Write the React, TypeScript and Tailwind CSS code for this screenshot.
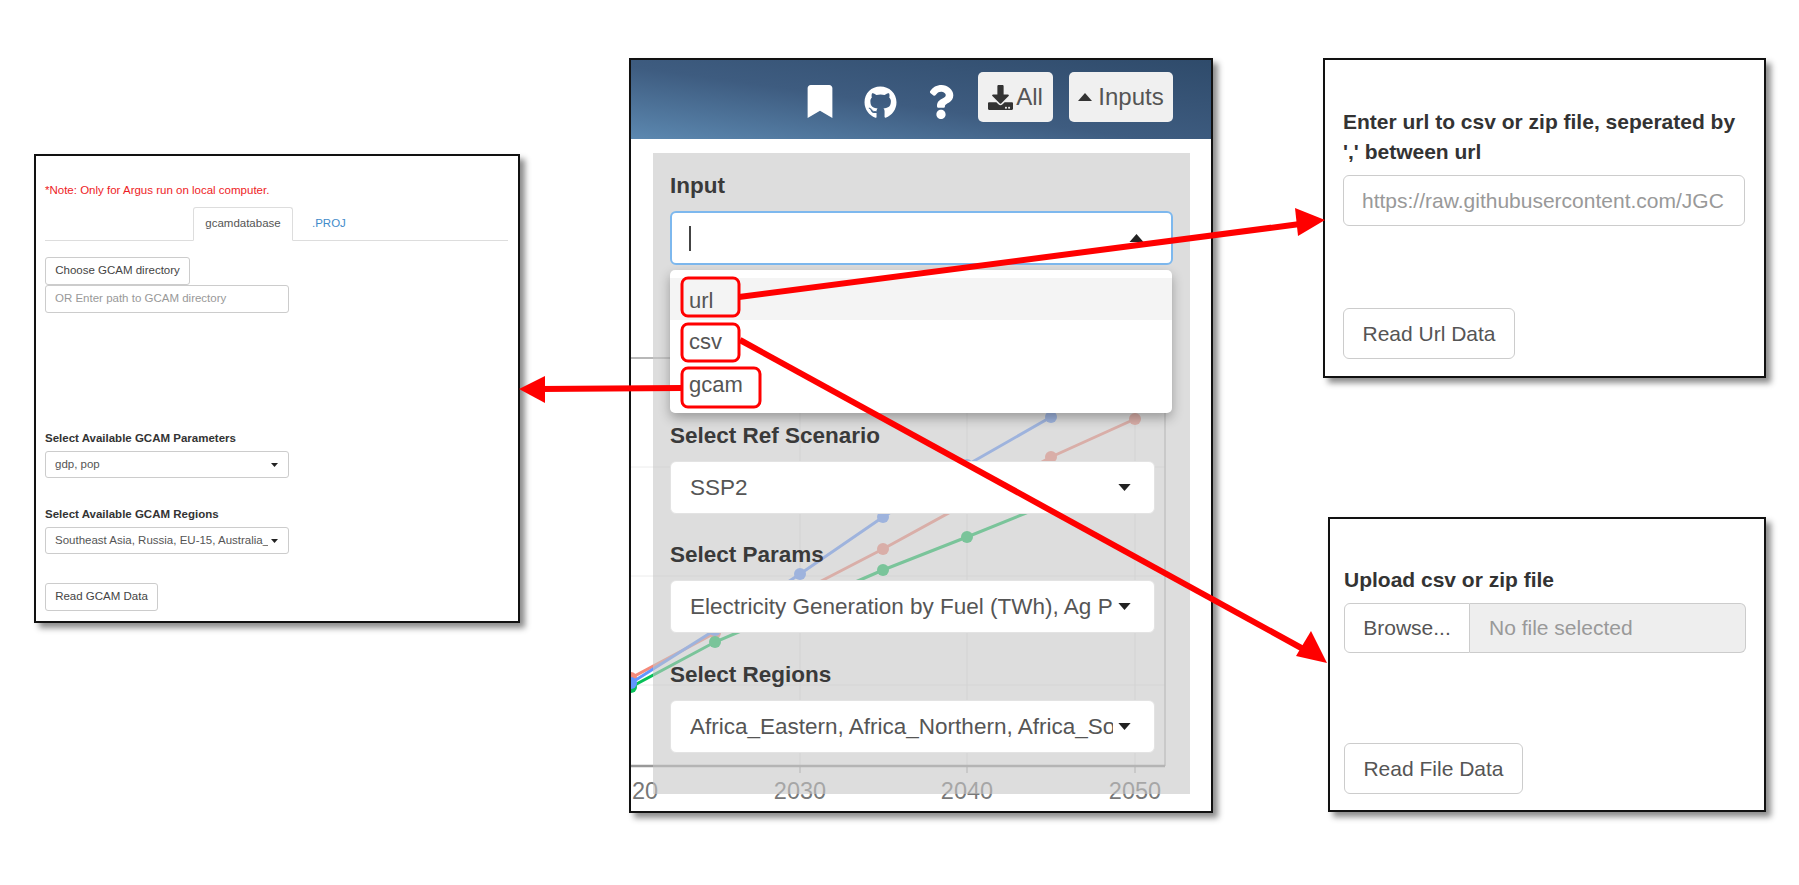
import React from 'react';
import { FaBookmark, FaDownload, FaGithub, FaQuestion } from 'react-icons/fa';

// chart coordinates are page pixels, the svg viewBox starts at the chart origin
const series = [
    { color: '#f58a7a', pts: [[631, 678], [715, 633], [800, 592], [883, 549], [967, 503], [1051, 457], [1135, 419]] },
    { color: '#08c058', pts: [[631, 687], [715, 642], [800, 606], [883, 570], [967, 537], [1051, 503], [1135, 470]] },
    { color: '#6297ff', pts: [[631, 683], [715, 630], [800, 574], [883, 517], [967, 465], [1051, 417]] },
];

function Caret({ up = false, className = '' }: { up?: boolean; className?: string }) {
    return (
        <svg className={`shrink-0 ${className}`} viewBox="0 0 14 8">
            <polygon points={up ? '7,0 14,8 0,8' : '0,0 14,0 7,8'} fill="currentColor" />
        </svg>
    );
}

function Frame({ className, children }: { className: string; children: React.ReactNode }) {
    return (
        <div className={`absolute bg-white border-2 border-[#111] shadow-[5px_5px_6px_rgba(0,0,0,0.45)] ${className}`}>
            {children}
        </div>
    );
}

function BigSelect({ label, value, mt }: { label: string; value: string; mt: string }) {
    return (
        <div className={mt}>
            <div className="h-[24px] leading-[24px] text-[22.5px] font-bold text-[#3a3a3a]">{label}</div>
            <div className="mt-[13px] w-[485px] h-[53px] bg-white rounded-[6px] border border-[#e3e3e3] flex items-center pl-[19px] pr-[23px] text-[22.5px] text-[#555]">
                <span className="flex-1 overflow-hidden whitespace-nowrap">{value}</span>
                <Caret className="ml-[5px] w-[13px] h-[7px] text-[#222]" />
            </div>
        </div>
    );
}

function SmallSelect({ label, value, mt }: { label: string; value: string; mt: string }) {
    return (
        <div className={mt}>
            <div className="h-[14px] leading-[14px] text-[11.5px] font-bold text-[#333]">{label}</div>
            <div className="mt-[6px] w-[244px] h-[27px] border border-[#ccc] rounded-[3px] flex items-center pl-[9px] pr-[10px] text-[11.5px] text-[#555]">
                <span className="flex-1 overflow-hidden whitespace-nowrap">{value}</span>
                <Caret className="ml-[3px] w-[7px] h-[4px] text-[#222]" />
            </div>
        </div>
    );
}

function GcamPanel() {
    return (
        <Frame className="left-[34px] top-[154px] w-[486px] h-[469px] px-[9px] text-[11.5px]">
            <div className="pt-[27px] h-[51px] leading-[14px] text-[11.5px] text-[#ee1c25]">*Note: Only for Argus run on local computer.</div>
            <div className="h-[34px] w-[463px] border-b border-[#ddd] flex pl-[148px]">
                <div className="w-[100px] h-[34px] bg-white border border-[#ddd] border-b-white rounded-t-[3px] flex items-center justify-center text-[#555]">gcamdatabase</div>
                <div className="ml-[19px] h-[33px] flex items-center text-[#428bca]">.PROJ</div>
            </div>
            <div className="mt-[16px] w-[145px] h-[28px] border border-[#ccc] rounded-[3px] flex items-center justify-center text-[#444]">Choose GCAM directory</div>
            <div className="w-[244px] h-[28px] border border-[#ccc] rounded-[3px] flex items-center pl-[9px] text-[#999]">OR Enter path to GCAM directory</div>
            <SmallSelect mt="mt-[118px]" label="Select Available GCAM Parameters" value="gdp, pop" />
            <SmallSelect mt="mt-[29px]" label="Select Available GCAM Regions" value="Southeast Asia, Russia, EU-15, Australia_NZ" />
            <div className="mt-[29px] w-[113px] h-[28px] border border-[#ccc] rounded-[3px] flex items-center justify-center text-[#444]">Read GCAM Data</div>
        </Frame>
    );
}

function UrlPanel() {
    return (
        <Frame className="left-[1323px] top-[58px] w-[443px] h-[320px] pl-[18px]">
            <div className="pt-[47px] w-[410px] text-[21px] leading-[30px] font-bold text-[#333] whitespace-nowrap">
                <div>Enter url to csv or zip file, seperated by</div>
                <div>',' between url</div>
            </div>
            <div className="mt-[8px] w-[402px] h-[51px] border border-[#ccc] rounded-[6px] flex items-center pl-[18px] text-[21px] text-[#999] overflow-hidden whitespace-nowrap">https://raw.githubusercontent.com/JGC</div>
            <div className="mt-[82px] w-[172px] h-[51px] border border-[#ccc] rounded-[6px] flex items-center justify-center text-[21px] text-[#555]">Read Url Data</div>
        </Frame>
    );
}

function FilePanel() {
    return (
        <Frame className="left-[1328px] top-[517px] w-[438px] h-[295px] pl-[14px]">
            <div className="pt-[48px] h-[84px] leading-[26px] text-[21px] font-bold text-[#333]">Upload csv or zip file</div>
            <div className="w-[402px] h-[50px] flex text-[21px]">
                <div className="w-[126px] border border-[#ccc] rounded-l-[6px] flex items-center justify-center text-[#555]">Browse...</div>
                <div className="flex-1 bg-[#eeeeee] border border-l-0 border-[#ccc] rounded-r-[6px] flex items-center pl-[19px] text-[#999]">No file selected</div>
            </div>
            <div className="mt-[90px] w-[179px] h-[51px] border border-[#ccc] rounded-[6px] flex items-center justify-center text-[21px] text-[#555]">Read File Data</div>
        </Frame>
    );
}

function Chart() {
    return (
        <svg className="absolute left-0 top-0 w-[580px] h-[671px]" viewBox="631 139 580 671">
            {[358, 467, 576, 685].map((y) => (
                <line key={y} x1="631" x2="1165" y1={y} y2={y} stroke={y === 358 ? '#b8b8b8' : '#ececec'} strokeWidth={y === 358 ? 2 : 1} />
            ))}
            {[800, 967, 1135].map((x) => (
                <g key={x}>
                    <line x1={x} x2={x} y1="358" y2="766" stroke="#e6e6e6" />
                    <line x1={x} x2={x} y1="766" y2="773" stroke="#999" />
                </g>
            ))}
            <line x1="1165" x2="1165" y1="358" y2="766" stroke="#bbb" strokeWidth="1.5" />
            <line x1="631" x2="1165" y1="766" y2="766" stroke="#999" strokeWidth="2.5" />
            {series.map((s) => (
                <g key={s.color}>
                    <polyline points={s.pts.map((p) => p.join(',')).join(' ')} fill="none" stroke={s.color} strokeWidth="3" />
                    {s.pts.map((p) => (
                        <circle key={p[0]} cx={p[0]} cy={p[1]} r="6" fill={s.color} />
                    ))}
                </g>
            ))}
            <g fill="#777" fontSize="23.5" fontFamily="Liberation Sans, sans-serif" textAnchor="middle">
                <text x="645" y="799">20</text>
                <text x="800" y="799">2030</text>
                <text x="967" y="799">2040</text>
                <text x="1135" y="799">2050</text>
            </g>
        </svg>
    );
}

function InputsPanel() {
    return (
        <Frame className="left-[629px] top-[58px] w-[584px] h-[755px] overflow-hidden">
            <div className="h-[79px] bg-[linear-gradient(188deg,#2f4b6b_0%,#3e5c80_55%,#5c88b0_100%)] flex items-start justify-end pt-[12px] pr-[38px] text-white">
                <FaBookmark className="mt-[13px] w-[26px] h-[33px]" />
                <FaGithub className="mt-[14px] ml-[31px] w-[33px] h-[33px]" />
                <FaQuestion className="mt-[13px] ml-[31px] w-[26px] h-[34px]" />
                <div className="ml-[24px] w-[75px] h-[50px] rounded-[5px] bg-[#f0f0f0] flex items-center justify-center text-[#555] text-[24px]">
                    <FaDownload className="w-[25px] h-[25px] mr-[3px] text-[#333]" />
                    All
                </div>
                <div className="ml-[16px] w-[104px] h-[50px] rounded-[5px] bg-[#f0f0f0] flex items-center justify-center text-[#555] text-[24px]">
                    <Caret up className="mr-[6px] w-[14px] h-[8px] text-[#333]" />
                    Inputs
                </div>
            </div>
            <div className="relative h-[672px] pt-[14px] pl-[22px]">
                <Chart />
                <div className="relative w-[537px] h-[641px] bg-[#c7c7c7]/60 pt-[21px] px-[17px]">
                    <div className="h-[24px] leading-[24px] text-[22.5px] font-bold text-[#3a3a3a]">Input</div>
                    <div className="mt-[13px] w-[503px] h-[54px] bg-white rounded-[6px] border-2 border-[#7db8ee] flex items-center pl-[17px] pr-[27px]">
                        <div className="w-[2px] h-[25px] bg-[#444]" />
                        <div className="flex-1" />
                        <Caret up className="w-[15px] h-[8px] text-[#222]" />
                    </div>
                    <BigSelect mt="mt-[159px]" label="Select Ref Scenario" value="SSP2" />
                    <BigSelect mt="mt-[29px]" label="Select Params" value="Electricity Generation by Fuel (TWh), Ag Production" />
                    <BigSelect mt="mt-[30px]" label="Select Regions" value="Africa_Eastern, Africa_Northern, Africa_Southern" />
                    <div className="absolute left-[17px] top-[117px] w-[502px] h-[143px] bg-white rounded-[5px] pt-[8px] shadow-[0_5px_12px_rgba(0,0,0,0.3)] text-[22px] text-[#555]">
                        <div className="h-[42px] bg-[#f4f4f4] flex items-center pl-[19px] pt-[3px]">url</div>
                        <div className="h-[43px] flex items-center pl-[19px]">csv</div>
                        <div className="h-[43px] flex items-center pl-[19px]">gcam</div>
                    </div>
                </div>
            </div>
        </Frame>
    );
}

function Annotations() {
    return (
        <svg className="absolute left-0 top-0 w-[1799px] h-[885px] pointer-events-none" viewBox="0 0 1799 885">
            <g fill="none" stroke="#ff0000" strokeWidth="3">
                <rect x="682" y="278" width="57" height="38" rx="6" />
                <rect x="682" y="324" width="57" height="37" rx="6" />
                <rect x="682" y="368" width="78" height="39" rx="6" />
            </g>
            <g stroke="#ff0000" strokeWidth="6" fill="#ff0000">
                <line x1="739" y1="297" x2="1300" y2="224" />
                <line x1="740" y1="340" x2="1305" y2="650" />
                <line x1="681" y1="388" x2="540" y2="389" />
                <polygon stroke="none" points="1325,220 1295,208 1298,236" />
                <polygon stroke="none" points="1327,663 1296,656 1311,631" />
                <polygon stroke="none" points="519,389 545,376 545,403" />
            </g>
        </svg>
    );
}

export default function App() {
    return (
        <div className="relative w-[1799px] h-[885px] overflow-hidden bg-white font-['Liberation_Sans',Arial,sans-serif]">
            <GcamPanel />
            <InputsPanel />
            <UrlPanel />
            <FilePanel />
            <Annotations />
        </div>
    );
}
